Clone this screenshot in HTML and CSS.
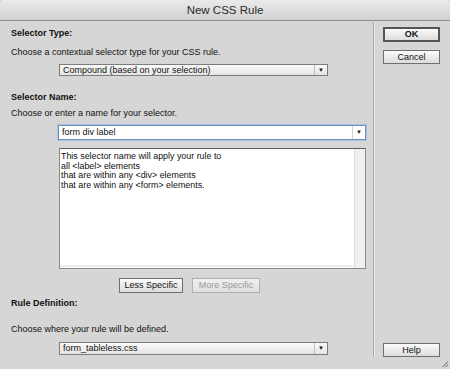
FILE: index.html
```html
<!DOCTYPE html>
<html>
<head>
<meta charset="utf-8">
<link rel="stylesheet" href="styles.css">
</head>
<body>
<div class="window">
  <div class="titlebar">New CSS Rule</div>
  <div class="content">
    <div class="left">
      <div class="heading h-type">Selector Type:</div>
      <div class="text t-type">Choose a contextual selector type for your CSS rule.</div>
      <div class="select s-type"><span class="val">Compound (based on your selection)</span><span class="arrow">▼</span></div>
      <div class="heading h-name">Selector Name:</div>
      <div class="text t-name">Choose or enter a name for your selector.</div>
      <div class="combo"><span class="val">form div label</span><span class="arrow">▼</span></div>
      <div class="desc">
        <div class="desc-text">This selector name will apply your rule to<br>all &lt;label&gt; elements<br>that are within any &lt;div&gt; elements<br>that are within any &lt;form&gt; elements.</div>
        <div class="scroll"></div>
      </div>
      <div class="spec-row">
        <div class="btn spec">Less Specific</div>
        <div class="btn spec disabled">More Specific</div>
      </div>
      <div class="heading h-rule">Rule Definition:</div>
      <div class="text t-rule">Choose where your rule will be defined.</div>
      <div class="select s-rule"><span class="val">form_tableless.css</span><span class="arrow">▼</span></div>
    </div>
    <div class="divider"></div>
    <div class="right">
      <div class="btn side default">OK</div>
      <div class="btn side cancel">Cancel</div>
      <div class="spacer"></div>
      <div class="btn side help">Help</div>
    </div>
  </div>
  <div class="grip"></div>
</div>
</body>
</html>
```
FILE: styles.css
```css
html, body {
  margin: 0;
  padding: 0;
}
body {
  width: 450px;
  height: 369px;
  overflow: hidden;
  background: #d6d6d6;
  font-family: "Liberation Sans", Arial, sans-serif;
  color: #111;
}
.window {
  width: 450px;
  height: 369px;
  position: relative;
  background: #d6d6d6;
  display: flex;
  flex-direction: column;
}
.titlebar {
  height: 20px;
  line-height: 20px;
  text-align: center;
  font-size: 11.5px;
  color: #2a2a2a;
  background: linear-gradient(#eaeaea, #d2d2d2);
  border-bottom: 1px solid #8c8c8c;
  border-radius: 4px 4px 0 0;
}
.content {
  flex: 1;
  display: flex;
}
.left {
  width: 373px;
  padding-left: 11px;
  box-sizing: border-box;
  display: flex;
  flex-direction: column;
}
.heading {
  font-size: 9px;
  font-weight: bold;
  line-height: 12px;
  height: 12px;
}
.text {
  font-size: 9px;
  line-height: 12px;
  height: 12px;
}
.h-type { margin-top: 6px; }
.t-type { margin-top: 7px; }
.s-type { margin-top: 6px; }
.h-name { margin-top: 15px; }
.t-name { margin-top: 4px; }
.combo { margin-top: 6px; }
.desc { margin-top: 8px; }
.spec-row { margin-top: 9px; }
.h-rule { margin-top: 4px; }
.t-rule { margin-top: 14px; }
.s-rule { margin-top: 7px; }

.select {
  margin-left: 48px;
  width: 269px;
  height: 12px;
  box-sizing: border-box;
  border: 1px solid #7c7c7c;
  background: linear-gradient(#fafafa, #e4e4e4);
  display: flex;
  font-size: 9px;
  line-height: 10px;
}
.s-rule { height: 13px; }
.select .val {
  flex: 1;
  padding-left: 3px;
  border-right: 1px solid #bdbdbd;
}
.arrow {
  width: 12px;
  text-align: center;
  font-size: 6px;
  color: #222;
}
.combo {
  margin-left: 47px;
  width: 308px;
  height: 15px;
  box-sizing: border-box;
  border: 1px solid #6d8fb8;
  box-shadow: 0 0 0 1px #a9c3e2;
  background: #fff;
  display: flex;
  font-size: 9px;
  line-height: 13px;
}
.combo .val {
  flex: 1;
  padding-left: 3px;
  border-right: 1px solid #d0d0d0;
}
.combo .arrow {
  width: 12px;
  line-height: 13px;
}
.desc {
  margin-left: 48px;
  width: 307px;
  height: 121px;
  box-sizing: border-box;
  border: 1px solid #8a8a8a;
  border-top-color: #5e5e5e;
  background: #fff;
  display: flex;
}
.desc-text {
  flex: 1;
  font-size: 8.9px;
  line-height: 9.7px;
  padding-top: 3px;
  padding-left: 1px;
  border-bottom: 2px solid #ededed;
  margin-bottom: 1px;
}
.scroll {
  width: 10px;
  background: #f0f0f0;
  border-left: 1px solid #dcdcdc;
}
.spec-row {
  display: flex;
  gap: 9px;
  margin-left: 108px;
}
.btn {
  box-sizing: border-box;
  border: 1px solid #6f6f6f;
  background: linear-gradient(#fbfbfb, #dcdcdc);
  font-size: 9px;
  text-align: center;
  color: #111;
}
.spec {
  height: 15px;
  line-height: 13px;
}
.spec:first-child { width: 64px; }
.spec.disabled {
  width: 68px;
  color: #9a9a9a;
  border-color: #b0b0b0;
  background: linear-gradient(#f0f0f0, #e0e0e0);
}
.divider {
  width: 1px;
  margin-top: 1px;
  margin-bottom: 12px;
  background: #a8a8a8;
  border-right: 1px solid #ececec;
}
.right {
  flex: 1;
  padding-left: 8px;
  padding-top: 6px;
  display: flex;
  flex-direction: column;
}
.side {
  width: 57px;
  height: 14px;
  line-height: 12px;
}
.default {
  border: 2px solid #555;
  height: 15px;
  line-height: 11px;
  font-weight: bold;
}
.cancel { margin-top: 8px; }
.spacer { flex: 1; }
.help { margin-bottom: 12px; }
.grip {
  position: absolute;
  right: 2px;
  bottom: 2px;
  width: 6px;
  height: 6px;
  background: linear-gradient(135deg, transparent 50%, #a0a0a0 50%, #a0a0a0 60%, transparent 60%, transparent 75%, #a0a0a0 75%, #a0a0a0 85%, transparent 85%);
}
```
